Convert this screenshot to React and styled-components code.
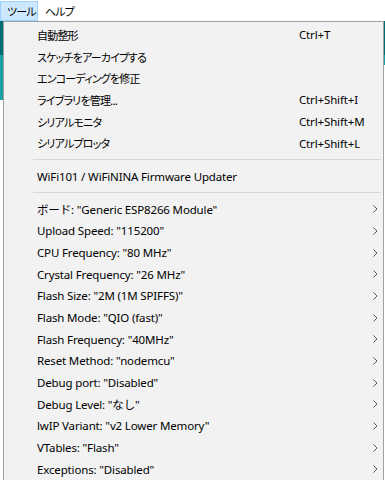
import React from "react";
import styled, { createGlobalStyle } from "styled-components";

const Global = createGlobalStyle`
  html, body {
    margin: 0;
    padding: 0;
    background: #ffffff;
    overflow: hidden;
  }
  body {
    font-family: "Noto Sans", "Noto Sans CJK JP", sans-serif;
    font-size: 11.5px;
    letter-spacing: -0.15px;
    color: #000;
  }
`;

const Window = styled.div`
  width: 385px;
  height: 480px;
  display: flex;
  flex-direction: column;
  overflow: hidden;
`;

const MenuBar = styled.div`
  height: 21px;
  display: flex;
  align-items: stretch;
  background: #ffffff;
  flex-shrink: 0;
`;

const BarItem = styled.div`
  display: flex;
  align-items: center;
  padding: 0 1px 0 6px;
  margin: 1px 0 0;
  font-family: "Noto Sans CJK JP", sans-serif;
  font-size: 11px;
  letter-spacing: -0.8px;
  font-feature-settings: "palt";
  background: ${(p) => (p.$active ? "#cce8ff" : "transparent")};
  border: 1px solid ${(p) => (p.$active ? "#99d1ff" : "transparent")};
`;

const Stage = styled.div`
  flex: 1;
  display: flex;
  min-height: 0;
`;

const Edge = styled.div`
  width: ${(p) => p.$w}px;
  flex-shrink: 0;
  display: flex;
  flex-direction: column;
  background: #ffffff;
`;

const Strip = styled.div`
  height: ${(p) => p.$h}px;
  background: ${(p) => p.$c};
`;

const Menu = styled.div`
  flex: 1;
  background: #f2f2f2;
  border: 1px solid #a0a0a0;
  border-bottom: none;
  padding-top: 2px;
  display: flex;
  flex-direction: column;
`;

const Row = styled.div`
  height: 22px;
  display: grid;
  grid-template-columns: 33px 262px 1fr 16px;
  align-items: center;
  white-space: nowrap;
`;

const Label = styled.span`
  grid-column: 2;
  ${(p) =>
    p.$jp &&
    `
    font-family: "Noto Sans CJK JP", sans-serif;
    font-size: 11px;
    letter-spacing: -0.8px;
    font-feature-settings: "palt";
  `}
`;

const Shortcut = styled.span`
  grid-column: 3;
`;

const Arrow = styled.span`
  grid-column: 4;
  display: flex;
  align-items: center;
  padding-left: 6px;
`;

const Separator = styled.div`
  height: ${(p) => p.$h}px;
  display: flex;
  align-items: center;
  padding: 0 2px 0 29px;

  &::after {
    content: "";
    flex: 1;
    height: 1px;
    background: #d7d7d7;
  }
`;

const Chevron = () => (
  <svg width="5" height="8" viewBox="0 0 5 8">
    <polyline points="0.5,0.5 4,4 0.5,7.5" fill="none" stroke="#5a5a5a" strokeWidth="1" />
  </svg>
);

const top = [
  { t: "自動整形", k: "Ctrl+T", jp: true },
  { t: "スケッチをアーカイブする", jp: true },
  { t: "エンコーディングを修正", jp: true },
  { t: "ライブラリを管理...", k: "Ctrl+Shift+I", jp: true },
  { t: "シリアルモニタ", k: "Ctrl+Shift+M", jp: true },
  { t: "シリアルプロッタ", k: "Ctrl+Shift+L", jp: true },
];

const boards = [
  'ボード: "Generic ESP8266 Module"',
  'Upload Speed: "115200"',
  'CPU Frequency: "80 MHz"',
  'Crystal Frequency: "26 MHz"',
  'Flash Size: "2M (1M SPIFFS)"',
  'Flash Mode: "QIO (fast)"',
  'Flash Frequency: "40MHz"',
  'Reset Method: "nodemcu"',
  'Debug port: "Disabled"',
  'Debug Level: "なし"',
  'lwIP Variant: "v2 Lower Memory"',
  'VTables: "Flash"',
  'Exceptions: "Disabled"',
];

export default function App() {
  return (
    <Window>
      <Global />
      <MenuBar>
        <BarItem $active>ツール</BarItem>
        <BarItem>ヘルプ</BarItem>
      </MenuBar>
      <Stage>
        <Edge $w={3}>
          <Strip $h={34} $c="#006d73" />
          <Strip $h={45} $c="#17a1a5" />
        </Edge>
        <Menu>
          {top.map((r) => (
            <Row key={r.t}>
              <Label $jp={r.jp}>{r.t}</Label>
              {r.k && <Shortcut>{r.k}</Shortcut>}
            </Row>
          ))}
          <Separator $h={12} />
          <Row>
            <Label>WiFi101 / WiFiNINA Firmware Updater</Label>
          </Row>
          <Separator $h={11} />
          {boards.map((t) => (
            <Row key={t}>
              <Label>{t}</Label>
              <Arrow>
                <Chevron />
              </Arrow>
            </Row>
          ))}
        </Menu>
        <Edge $w={1}>
          <Strip $h={34} $c="#006d73" />
          <Strip $h={10} $c="#17a1a5" />
        </Edge>
      </Stage>
    </Window>
  );
}
